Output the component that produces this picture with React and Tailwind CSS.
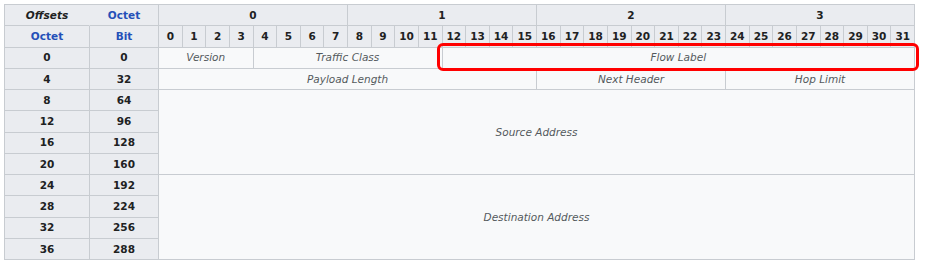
import React from "react";

const B = "border-r border-b border-[#c8ccd1]";
const HB = `${B} bg-[#eaecf0] flex items-center justify-center font-bold text-[10.5px]`;
const H = `${HB} text-[#202122]`;
const HL = `${HB} text-[#2450b8]`;
const D = `${B} bg-[#f8f9fa] flex items-center justify-center italic text-[#54595d] text-[10.5px]`;

export default function App() {
  const bits = Array.from({ length: 32 }, (_, i) => i);
  const offsets = [
    [8, 64],
    [12, 96],
    [16, 128],
    [20, 160],
    [24, 192],
    [28, 224],
    [32, 256],
    [36, 288],
  ];
  return (
    <div className="relative w-[931px] h-[271px] bg-white" style={{ fontFamily: '"DejaVu Sans", sans-serif' }}>
      <div className="absolute left-[4px] top-[4px] w-[911px] border-t border-l border-[#c8ccd1] grid grid-cols-[85px_69px_repeat(32,1fr)] grid-rows-[repeat(12,21.25px)] leading-none">
        <div className={`${H} italic border-r-transparent`}>Offsets</div>
        <div className={HL}>Octet</div>
        {[0, 1, 2, 3].map((o) => (
          <div key={o} className={`${H} col-span-8`}>{o}</div>
        ))}
        <div className={HL}>Octet</div>
        <div className={HL}>Bit</div>
        {bits.map((b) => (
          <div key={b} className={H}>{b}</div>
        ))}
        <div className={H}>0</div>
        <div className={H}>0</div>
        <div className={`${D} col-span-4`}>Version</div>
        <div className={`${D} col-span-8`}>Traffic Class</div>
        <div className={`${D} col-span-20`}>Flow Label</div>
        <div className={H}>4</div>
        <div className={H}>32</div>
        <div className={`${D} col-span-16`}>Payload Length</div>
        <div className={`${D} col-span-8`}>Next Header</div>
        <div className={`${D} col-span-8`}>Hop Limit</div>
        {offsets.map(([o, b], i) => (
          <React.Fragment key={o}>
            <div className={`${H} col-start-1`} style={{ gridRow: i + 5 }}>{o}</div>
            <div className={`${H} col-start-2`} style={{ gridRow: i + 5 }}>{b}</div>
          </React.Fragment>
        ))}
        <div className={`${D} col-start-3 col-end-[35] row-start-5 row-span-4`}>Source Address</div>
        <div className={`${D} col-start-3 col-end-[35] row-start-9 row-span-4`}>Destination Address</div>
      </div>
      <div className="absolute left-[437px] top-[43px] w-[482px] h-[28px] border-[3px] border-[#ff0000] rounded-[6px]" />
    </div>
  );
}
